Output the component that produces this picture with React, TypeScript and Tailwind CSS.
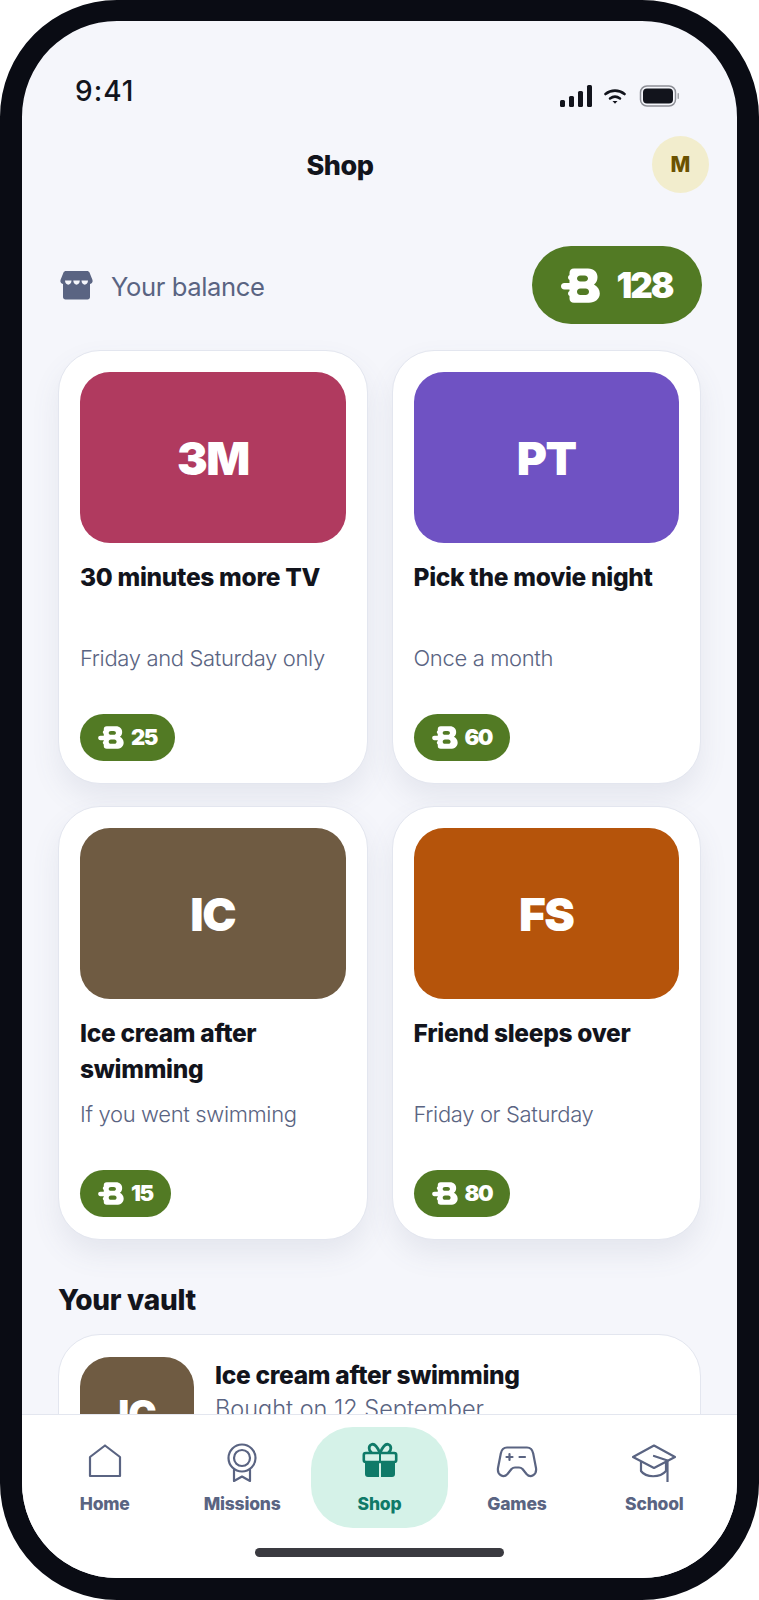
import React from "react";

const heading = "font-['Inter','Liberation_Sans',sans-serif]";
const body = "font-['Inter','Liberation_Sans',sans-serif]";

function Coin({ className }: { className: string }) {
  return (
    <svg viewBox="0 0 39 35" className={className} fill="currentColor">
      <path
        fillRule="evenodd"
        d="M13 0.500H27C33 0.500 36.500 4.500 36.500 9C36.500 12 35.500 14.500 33 16.500C36.500 18.500 38.800 21.500 38.800 25.500C38.800 31 34 34.800 28 34.800H13C10 34.800 8.500 33 8.500 30.500V28C6.500 27 6.500 24 8.500 23V21.500H3.500C1.200 21.500 0 20 0 18.200C0 16.400 1.200 15 3.500 15H8.500V12C6.500 11 6.500 8 8.500 7V5C8.500 2.500 10 0.500 13 0.500ZM19.500 7.500C17.200 7.500 16 9 16 10.500C16 12 17.200 13.500 19.500 13.500H23.500C25.800 13.500 27 12 27 10.500C27 9 25.800 7.500 23.500 7.500ZM19.500 20.500C17.200 20.500 16 22 16 23.800C16 25.600 17.200 27 19.500 27H24.500C26.800 27 28 25.600 28 23.800C28 22 26.800 20.500 24.500 20.500Z"
      />
    </svg>
  );
}

function StoreIcon() {
  return (
    <svg viewBox="0 0 33 30" className="w-[33px] h-[30px] text-[#5a6482]" fill="currentColor">
      <path d="M6 1H27C28 1 29 1.500 29.500 2.500L32.500 10C33 12 32 13.500 30 14V27C30 28.500 29 29.500 27.500 29.500H5.500C4 29.500 3 28.500 3 27V14C1 13.500 0 12 0.500 10L3.500 2.500C4 1.500 5 1 6 1Z" />
      <path d="M5 10.500H11.500C11.500 16 5 16 5 10.500Z M13.300 10.500H19.800C19.800 16 13.300 16 13.300 10.500Z M21.500 10.500H28C28 16 21.500 16 21.500 10.500Z" fill="#f5f6fb" />
    </svg>
  );
}

function HomeIcon() {
  return (
    <svg viewBox="0 0 44 40" className="w-[44px] h-[40px]" fill="none" stroke="currentColor" strokeWidth="2.200" strokeLinejoin="round" strokeLinecap="round">
      <path d="M7 15L22 3.500L37 15V34H7Z" />
    </svg>
  );
}

function MissionsIcon() {
  return (
    <svg viewBox="0 0 44 40" className="w-[44px] h-[40px]" fill="none" stroke="currentColor" strokeWidth="2.200" strokeLinejoin="round" strokeLinecap="round">
      <circle cx="22" cy="16" r="13.500" />
      <circle cx="22" cy="16" r="8" />
      <path d="M14 27.500V39L22 34.500L30 39V27.500" />
    </svg>
  );
}

function GiftIcon() {
  return (
    <svg viewBox="0 0 44 40" className="w-[44px] h-[40px] text-[#0f7a68]">
      <path d="M22 11C19 4 16 1.500 13.500 2.500C10.500 3.500 10.500 8 13 10M22 11C25 4 28 1.500 30.500 2.500C33.500 3.500 33.500 8 31 10" fill="none" stroke="currentColor" strokeWidth="2.800" strokeLinecap="round" />
      <rect x="5.800" y="11" width="32.400" height="9" rx="2" fill="#d5f2e8" stroke="currentColor" strokeWidth="2.600" />
      <path d="M7 21H21V35H10C8 35 7 34 7 32Z M23 21H37V32C37 34 36 35 34 35H23Z" fill="currentColor" />
      <rect x="21" y="11" width="2" height="10" fill="currentColor" />
    </svg>
  );
}

function GamesIcon() {
  return (
    <svg viewBox="0 0 44 40" className="w-[44px] h-[40px]" fill="none" stroke="currentColor" strokeWidth="2.200" strokeLinejoin="round" strokeLinecap="round">
      <path d="M12 5.500H32C35.500 5.500 37.500 8 38.200 11.500L41 26C42 33 35.500 36.500 31.500 32L27.500 27C26.500 26 25.500 25.500 24 25.500H20C18.500 25.500 17.500 26 16.500 27L12.500 32C8.500 36.500 2 33 3 26L5.800 11.500C6.500 8 8.500 5.500 12 5.500Z" />
      <path d="M11.500 15H17.500M14.500 12V18M24.500 15H30" />
    </svg>
  );
}

function SchoolIcon() {
  return (
    <svg viewBox="0 0 44 40" className="w-[44px] h-[40px]" fill="none" stroke="currentColor" strokeWidth="2.200" strokeLinejoin="round" strokeLinecap="round">
      <path d="M22 3.500L43 15L22 26L1 15Z" />
      <path d="M9 20V29C14 36 28 36 34 29V20" />
      <path d="M22 14L35.500 18.500V39.500" />
    </svg>
  );
}

function StatusIcons() {
  return (
    <div className="flex items-center gap-[12px]">
      <svg viewBox="0 0 32 22" className="w-[32px] h-[22px] text-[#12141c]" fill="currentColor">
        <rect x="0" y="15" width="5" height="7" rx="1.500" />
        <rect x="9" y="11" width="5" height="11" rx="1.500" />
        <rect x="18" y="6" width="5" height="16" rx="1.500" />
        <rect x="27" y="0" width="5" height="22" rx="1.500" />
      </svg>
      <svg viewBox="0 0 22 15" className="w-[22px] h-[15px] text-[#12141c]" fill="none" stroke="currentColor" strokeWidth="2.600" strokeLinecap="round">
        <path d="M1.500 5C7 0.500 15 0.500 20.500 5" />
        <path d="M6 9.500C9 7.300 13 7.300 16 9.500" />
        <path d="M8.500 12H13.500L11 14.800Z" fill="currentColor" stroke="none" />
      </svg>
      <svg viewBox="0 0 40 22" className="w-[43px] h-[22px]">
        <rect x="1" y="1" width="35" height="20" rx="6.500" fill="none" stroke="#8d8f96" strokeWidth="1.500" />
        <rect x="3.500" y="3.500" width="30" height="15" rx="4" fill="#12141c" />
        <rect x="38" y="8" width="1.500" height="6" rx="0.700" fill="#a4a6ac" />
      </svg>
    </div>
  );
}

const rewards = [
  { initials: "3M", title: "30 minutes more TV", note: "Friday and Saturday only", price: "25", color: "bg-[#b03a5f]" },
  { initials: "PT", title: "Pick the movie night", note: "Once a month", price: "60", color: "bg-[#6f52c3]" },
  { initials: "IC", title: "Ice cream after swimming", note: "If you went swimming", price: "15", color: "bg-[#6f5b42]" },
  { initials: "FS", title: "Friend sleeps over", note: "Friday or Saturday", price: "80", color: "bg-[#b5540b]" },
];

const navItems = [
  { label: "Home", icon: <HomeIcon /> },
  { label: "Missions", icon: <MissionsIcon /> },
  { label: "Shop", icon: <GiftIcon />, active: true },
  { label: "Games", icon: <GamesIcon /> },
  { label: "School", icon: <SchoolIcon /> },
];

export default function App() {
  return (
    <div className="w-[759px] h-[1600px] bg-white">
      <div className="h-full border-[22px] border-t-[21px] border-[#0a0c14] rounded-[117px] overflow-hidden bg-[#f5f6fb] flex flex-col">
        <div className="flex-1 overflow-hidden">
          {/* status bar */}
          <div className="h-[115px] pl-[53px] pr-[56px] pt-[52px] flex justify-between items-start">
            <span className={`${body} text-[28px] leading-[36px] font-medium text-[#12141c] tracking-[1px]`}>9:41</span>
            <div className="pt-[12px]">
              <StatusIcons />
            </div>
          </div>

          <div className="flex items-center pl-[6px] pr-[28px] h-[57px]">
            <h1 className={`${heading} flex-1 pt-[3px] text-center text-[27px] font-extrabold tracking-[-0.5px] text-[#12141c]`}>Shop</h1>
            <div className={`${heading} w-[57px] h-[57px] rounded-full bg-[#f2edcd] text-[#6b5200] text-[21px] font-extrabold flex items-center justify-center`}>
              M
            </div>
          </div>

          <div className="px-[36px] pt-[53px]">
            <div className="flex items-center justify-between pl-[2px] pb-[26px]">
              <div className="flex items-center gap-[18px]">
                <StoreIcon />
                <span className={`${body} pt-[4px] text-[25.600px] text-[#5a6482] tracking-[-0.4px]`}>Your balance</span>
              </div>
              <div className="h-[78px] w-[170px] mr-[-1px] rounded-full bg-[#527a24] text-white flex items-center justify-center gap-[16px]">
                <Coin className="w-[39px] h-[35px]" />
                <span className={`${heading} text-[35px] font-black tracking-[-2px]`}>128</span>
              </div>
            </div>

            <div className="grid grid-cols-2 gap-x-[24px] gap-y-[22px]">
              {rewards.map((r) => (
                <div key={r.initials} className="h-[434px] bg-white rounded-[42px] border-[1.500px] border-[#e3e6ef] pl-[21px] pr-[21px] pt-[21px] shadow-[0_14px_28px_rgba(90,100,130,0.10)]">
                  <div className={`${r.color} h-[171px] rounded-[30px] flex items-center justify-center`}>
                    <span className={`${heading} pt-[2px] text-white text-[46px] font-black tracking-[-1.500px]`}>{r.initials}</span>
                  </div>
                  <div className={`${heading} mt-[16px] h-[72px] text-[24.500px] leading-[36px] font-extrabold tracking-[-0.3px] text-[#12141c]`}>{r.title}</div>
                  <div className={`${body} mt-[9px] text-[22px] leading-[36px] font-light text-[#5a6482] tracking-[-0.35px]`}>{r.note}</div>
                  <div className="mt-[38px] inline-flex h-[47px] px-[18px] rounded-full bg-[#527a24] text-white items-center gap-[7px]">
                    <Coin className="w-[26px] h-[23px]" />
                    <span className={`${heading} text-[22px] font-black tracking-[-1.500px]`}>{r.price}</span>
                  </div>
                </div>
              ))}
            </div>

            <h2 className={`${heading} mt-[42px] text-[28px] leading-[36px] font-extrabold tracking-[-0.3px] text-[#12141c]`}>Your vault</h2>
            <div className="mt-[16px] h-[200px] bg-white rounded-[42px] border-[1.500px] border-[#e3e6ef] pl-[21px] pt-[22px] flex gap-[21px]">
              <div className="w-[114px] h-[114px] rounded-[30px] bg-[#6f5b42] flex items-center justify-center shrink-0">
                <span className={`${heading} text-white text-[38px] font-black tracking-[-1px]`}>IC</span>
              </div>
              <div>
                <div className={`${heading} text-[24.500px] leading-[36px] font-extrabold tracking-[-0.3px] text-[#12141c]`}>Ice cream after swimming</div>
                <div className={`${body} text-[23.500px] leading-[32px] font-light text-[#5a6482]`}>Bought on 12 September</div>
              </div>
            </div>
          </div>
        </div>

        {/* bottom nav */}
        <div className="h-[164px] shrink-0 bg-white border-t-[1.500px] border-[#e3e6ef] pt-[12px]">
          <div className="flex px-[14px] h-[101px]">
            {navItems.map((item) => (
              <div
                key={item.label}
                className={`flex-1 rounded-[42px] flex flex-col items-center pt-[15px] ${item.active ? "bg-[#d5f2e8] text-[#0f7a68]" : "text-[#5a6482]"}`}
              >
                {item.icon}
                <span className={`${heading} mt-[9px] text-[17.500px] leading-[26px] font-extrabold tracking-[-0.2px]`}>{item.label}</span>
              </div>
            ))}
          </div>
          <div className="mt-[20px] mx-auto w-[249px] h-[9px] rounded-full bg-[#3a3a40]" />
        </div>
      </div>
    </div>
  );
}
